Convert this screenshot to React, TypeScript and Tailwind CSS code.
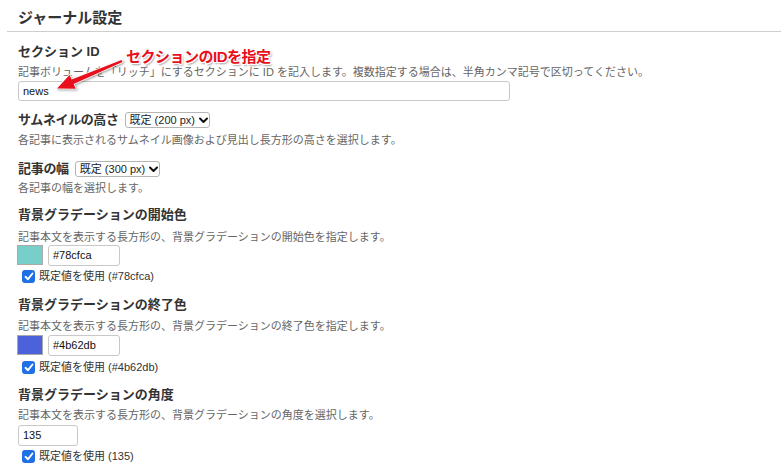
import React from "react";

const FONT = { fontFamily: '"Liberation Sans", "Noto Sans CJK JP", sans-serif' };

function Chevron() {
  return (
    <svg width="9" height="7" viewBox="0 0 9 7" className="ml-[4px]">
      <polyline points="1,1.5 4.5,5 8,1.5" fill="none" stroke="#111" strokeWidth="2" strokeLinecap="round" strokeLinejoin="round" />
    </svg>
  );
}

function Select({ text }: { text: string }) {
  return (
    <div className="ml-[6px] flex h-[16px] w-[85px] items-center rounded-[3px] border border-[#b5b5b5] bg-white pl-[4px] text-[11px] leading-[14px] text-[#222]">
      <span>{text}</span>
      <Chevron />
    </div>
  );
}

function Check({ label }: { label: string }) {
  return (
    <div className="flex h-[16px] items-center pl-[4px]">
      <div className="flex h-[13px] w-[13px] items-center justify-center rounded-[3px] bg-[#1f6fe5]">
        <svg width="10" height="9" viewBox="0 0 10 9">
          <polyline points="1.5,4.8 4,7.2 8.5,1.5" fill="none" stroke="#fff" strokeWidth="1.9" strokeLinecap="round" strokeLinejoin="round" />
        </svg>
      </div>
      <span className="ml-[4px] text-[11px] leading-[16px] text-[#333]">{label}</span>
    </div>
  );
}

function ColorRow({ color, value }: { color: string; value: string }) {
  return (
    <div className="flex h-[20px] items-start">
      <div className="h-[20px] w-[26px] border border-[#a9a9a9]" style={{ background: color }} />
      <div className="ml-[5px] flex h-[21px] w-[72px] items-center rounded-[3px] border border-[#c8c8c8] bg-white pl-[4px] text-[11px] text-[#111]">
        {value}
      </div>
    </div>
  );
}

const Label = ({ children, className = "" }: { children: React.ReactNode; className?: string }) => (
  <div className={`text-[13px] font-bold leading-[18px] text-[#333] ${className}`}>{children}</div>
);

const Desc = ({ children, className = "" }: { children: React.ReactNode; className?: string }) => (
  <div className={`text-[11px] leading-[16px] text-[#666] ${className}`}>{children}</div>
);

export default function App() {
  return (
    <div className="relative h-[472px] w-[781px] overflow-hidden bg-white" style={FONT}>
      <div className="ml-[7px] border-b border-[#cfcfcf] pb-[3px] pl-[11px] pt-[8px]">
        <div className="text-[15px] font-bold leading-[20px] text-[#333]">ジャーナル設定</div>
      </div>
      <div className="pl-[18px]">
        <Label className="mt-[11px]">セクション ID</Label>
        <Desc className="mt-[3px]">記事ボリュームを「リッチ」にするセクションに ID を記入します。複数指定する場合は、半角カンマ記号で区切ってください。</Desc>
        <div className="mt-[1px] flex h-[20px] w-[492px] items-center rounded-[3px] border border-[#c8c8c8] bg-white pl-[4px] text-[11px] text-[#111]">
          news
        </div>

        <div className="mt-[10px] flex h-[18px] items-center">
          <Label className="tracking-[-0.4px]">サムネイルの高さ</Label>
          <Select text="既定 (200 px)" />
        </div>
        <Desc className="mt-[3px]">各記事に表示されるサムネイル画像および見出し長方形の高さを選択します。</Desc>

        <div className="mt-[12px] flex h-[18px] items-center">
          <Label className="tracking-[-0.3px]">記事の幅</Label>
          <Select text="既定 (300 px)" />
        </div>
        <Desc className="mt-[2px]">各記事の幅を選択します。</Desc>

        <Label className="mt-[10px]">背景グラデーションの開始色</Label>
        <Desc className="mt-[5px]">記事本文を表示する長方形の、背景グラデーションの開始色を指定します。</Desc>
        <div className="-ml-[1px]">
          <ColorRow color="#78cfca" value="#78cfca" />
        </div>
        <div className="mt-[3px]">
          <Check label="既定値を使用 (#78cfca)" />
        </div>

        <Label className="mt-[12px]">背景グラデーションの終了色</Label>
        <Desc className="mt-[4px]">記事本文を表示する長方形の、背景グラデーションの終了色を指定します。</Desc>
        <div className="-ml-[1px] mt-[1px]">
          <ColorRow color="#4b62db" value="#4b62db" />
        </div>
        <div className="mt-[4px]">
          <Check label="既定値を使用 (#4b62db)" />
        </div>

        <Label className="mt-[11px]">背景グラデーションの角度</Label>
        <Desc className="mt-[3px]">記事本文を表示する長方形の、背景グラデーションの角度を選択します。</Desc>
        <div className="mt-[2px] flex h-[21px] w-[60px] items-center rounded-[3px] border border-[#c8c8c8] bg-white pl-[4px] text-[11px] text-[#111]">
          135
        </div>
        <div className="mt-[2px]">
          <Check label="既定値を使用 (135)" />
        </div>
      </div>

      {/* annotation overlay */}
      <svg className="absolute left-0 top-0" width="140" height="100" viewBox="0 0 140 100" style={{ filter: "drop-shadow(1px 1px 1px rgba(0,0,0,0.35))" }}>
        <polygon
          points="121.5,60 71.7,79.5 69.5,75 57,88.5 75.8,88.7 73.7,84.1 122.5,62"
          fill="#e8101c"
          stroke="#fff"
          strokeWidth="1.6"
          strokeLinejoin="round"
          style={{ paintOrder: "stroke" }}
        />
      </svg>
      <div
        className="absolute left-[126px] top-[48px] text-[15px] font-bold leading-[18px] tracking-[-0.5px] text-[#e8101c]"
        style={{
          textShadow:
            "1px 0 0 #fff, -1px 0 0 #fff, 0 1px 0 #fff, 0 -1px 0 #fff, 1px 1px 0 #fff, -1px -1px 0 #fff, 1px -1px 0 #fff, -1px 1px 0 #fff, 1.5px 1.5px 2px rgba(0,0,0,0.4)",
        }}
      >
        セクションのIDを指定
      </div>
    </div>
  );
}
